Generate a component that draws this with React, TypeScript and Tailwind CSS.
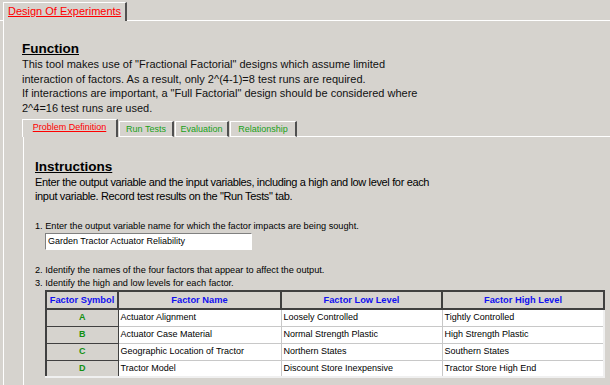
import React from "react";

const rows = [
  ["A", "Actuator Alignment", "Loosely Controlled", "Tightly Controlled"],
  ["B", "Actuator Case Material", "Normal Strength Plastic", "High Strength Plastic"],
  ["C", "Geographic Location of Tractor", "Northern States", "Southern States"],
  ["D", "Tractor Model", "Discount Store Inexpensive", "Tractor Store High End"],
];

export default function App() {
  return (
    <div
      className="w-[610px] h-[385px] overflow-hidden bg-[#d6d3ce] text-black"
      style={{ fontFamily: '"Liberation Sans", Arial, sans-serif' }}
    >
      {/* outer tab strip */}
      <div className="flex h-[21px] pt-[2px]">
        <div className="w-[3px] border-b border-white" />
        <div className="border-l border-t border-white border-r-2 border-r-[#505050] px-[4px] pt-[1px] text-[11px] leading-[15px] text-[#ff0000] underline">
          Design Of Experiments
        </div>
        <div className="flex-1 border-b border-white" />
      </div>
      <div className="ml-[3px] border-l border-white h-[364px] pl-[18px] pt-[20px]">
        <div className="text-[13.5px] font-bold underline leading-[16px]">Function</div>
        <div className="text-[11px] leading-[14.5px] text-[#111]">
          <div>This tool makes use of "Fractional Factorial" designs which assume limited</div>
          <div>interaction of factors. As a result, only 2^(4-1)=8 test runs are required.</div>
          <div>If interactions are important, a "Full Factorial" design should be considered where</div>
          <div>2^4=16 test runs are used.</div>
        </div>
        {/* inner tabs */}
        <div className="flex h-[18px] mt-[4px] items-end">
          <div className="h-[18px] w-[96px] border-l border-t border-white border-r-2 border-r-[#505050] text-center text-[9px] leading-[13px] text-[#ff0000] underline pt-[1px]">
            Problem Definition
          </div>
          <div className="h-[16px] ml-[1px] w-[55px] border-l border-t border-white border-r-2 border-r-[#505050] border-b border-b-white text-center text-[9px] leading-[14px] text-[#18a018]">
            Run Tests
          </div>
          <div className="h-[16px] ml-[1px] w-[54px] border-l border-t border-white border-r-2 border-r-[#505050] border-b border-b-white text-center text-[9px] leading-[14px] text-[#18a018]">
            Evaluation
          </div>
          <div className="h-[16px] ml-[1px] w-[67px] border-l border-t border-white border-r-2 border-r-[#505050] border-b border-b-white text-center text-[9px] leading-[14px] text-[#18a018]">
            Relationship
          </div>
          <div className="flex-1 border-b border-white" />
        </div>
        <div className="ml-[1px] border-l border-white h-[260px] pl-[11px] pt-[22px]">
          <div className="text-[13.5px] font-bold underline leading-[16px]">Instructions</div>
          <div className="text-[11px] leading-[14px] tracking-[-0.35px]">
            <div>Enter the output variable and the input variables, including a high and low level for each</div>
            <div>input variable. Record test results on the "Run Tests" tab.</div>
          </div>
          <div className="mt-[17px] text-[9.2px] leading-[12px]">
            1. Enter the output variable name for which the factor impacts are being sought.
          </div>
          <div className="ml-[10px] mt-[1px] w-[207px] h-[17px] bg-white border border-[#808080] border-r-white border-b-white px-[2px] text-[9px] leading-[14px]">
            Garden Tractor Actuator Reliability
          </div>
          <div className="mt-[14px] text-[9.2px] leading-[13px]">
            <div>2. Identify the names of the four factors that appear to affect the output.</div>
            <div>3. Identify the high and low levels for each factor.</div>
          </div>
          <table className="ml-[10px] border-collapse text-[9px] leading-[15px] border-2 border-[#404040] border-r-[#f0f0f0] border-b-[#f0f0f0]">
            <thead>
              <tr className="h-[18px]">
                <th className="p-0 w-[72px] bg-[#d6d3ce] border-r-2 border-b-2 border-[#404040] text-[#1010f0] font-bold text-[9.3px]">Factor Symbol</th>
                <th className="p-0 w-[163px] bg-[#d6d3ce] border-r-2 border-b-2 border-[#404040] text-[#1010f0] font-bold text-[9.3px]">Factor Name</th>
                <th className="p-0 w-[161px] bg-[#d6d3ce] border-r-2 border-b-2 border-[#404040] text-[#1010f0] font-bold text-[9.3px]">Factor Low Level</th>
                <th className="p-0 w-[162px] bg-[#d6d3ce] border-r-2 border-b-2 border-[#404040] text-[#1010f0] font-bold text-[9.3px]">Factor High Level</th>
              </tr>
            </thead>
            <tbody>
              {rows.map((r) => (
                <tr key={r[0]} className="h-[17px]">
                  <td className="p-0 bg-[#d6d3ce] border border-[#404040] border-l-white border-t-white text-center text-[#119011] font-bold">
                    {r[0]}
                  </td>
                  <td className="p-0 bg-white border border-[#c8c8c8] pl-[2px]">{r[1]}</td>
                  <td className="p-0 bg-white border border-[#c8c8c8] pl-[2px]">{r[2]}</td>
                  <td className="p-0 bg-white border border-[#c8c8c8] pl-[2px]">{r[3]}</td>
                </tr>
              ))}
            </tbody>
          </table>
        </div>
      </div>
    </div>
  );
}
